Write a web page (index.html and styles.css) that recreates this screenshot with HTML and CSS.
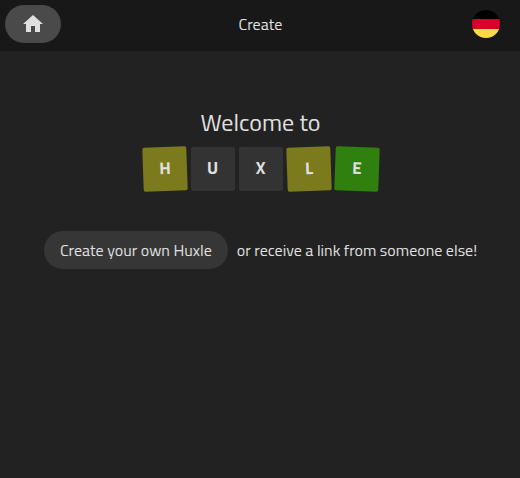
FILE: index.html
```html
<!DOCTYPE html>
<html lang="en">
<head>
<meta charset="utf-8">
<meta name="viewport" content="width=device-width, initial-scale=1">
<title>Huxle</title>
<link rel="stylesheet" href="styles.css">
</head>
<body>
<header class="topbar">
  <a class="pill home" href="#" aria-label="Home">
    <svg width="24" height="24" viewBox="0 0 24 24" aria-hidden="true"><path fill="currentColor" d="M10 20v-6h4v6h5v-8h3L12 3 2 12h3v8z"/></svg>
  </a>
  <span class="title">Create</span>
  <button class="language" type="button" aria-label="Deutsch">
    <svg width="28" height="28" viewBox="0 0 28 28" aria-hidden="true">
      <clipPath id="round"><circle cx="14" cy="14" r="14"/></clipPath>
      <g clip-path="url(#round)">
        <path fill="#000" d="M0 0h28v9H0z"/>
        <path fill="#d80027" d="M0 9h28v10H0z"/>
        <path fill="#ffda44" d="M0 19h28v9H0z"/>
      </g>
    </svg>
  </button>
</header>
<main class="welcome">
  <h1 class="heading">Welcome to</h1>
  <div class="tiles">
    <span class="tile present">H</span>
    <span class="tile">U</span>
    <span class="tile">X</span>
    <span class="tile present">L</span>
    <span class="tile correct">E</span>
  </div>
  <p class="actions">
    <a class="pill create" href="#">Create your own Huxle</a>
    <span>or receive a link from someone else!</span>
  </p>
</main>
</body>
</html>
```
FILE: styles.css
```css
* {
  box-sizing: border-box;
}

body {
  margin: 0;
  background: #222;
  color: #e0e0e0;
  font: 16px/22px "Titillium Web", Roboto, sans-serif;
}

.topbar {
  display: grid;
  grid-template-columns: 1fr auto 1fr;
  align-items: center;
  padding: 5px 20px 8px 5px;
  background: #181818;
}

.title {
  padding-left: 16px;
}

.pill {
  display: inline-flex;
  align-items: center;
  padding: 8px 16px;
  border-radius: 20px;
  background: #363636;
  color: inherit;
  text-decoration: none;
}

.home {
  justify-self: start;
  padding: 7px 16px;
  background: #4a4a4a;
}

.language {
  display: flex;
  justify-self: end;
  padding: 0;
  border: 0;
  background: none;
  cursor: pointer;
}

.welcome {
  display: flex;
  flex-direction: column;
  align-items: center;
  padding: 55px 16px 55px 17px;
}

.heading {
  margin: 0 0 9px;
  font-size: 24px;
  font-weight: 400;
  line-height: 32px;
}

.tiles {
  display: flex;
  gap: 4px;
}

.tile {
  display: grid;
  place-items: center;
  width: 44px;
  height: 44px;
  padding-bottom: 2px;
  border-radius: 2px;
  background: #333;
  font-size: 17px;
  font-weight: 700;
}

.present {
  background: #7b7b1e;
  transform: rotate(-2deg);
}

.correct {
  background: #2f800f;
  transform: rotate(2deg);
}

.actions {
  display: flex;
  flex-wrap: wrap;
  align-items: center;
  justify-content: center;
  gap: 9px;
  margin: 40px 0 0;
}
```
